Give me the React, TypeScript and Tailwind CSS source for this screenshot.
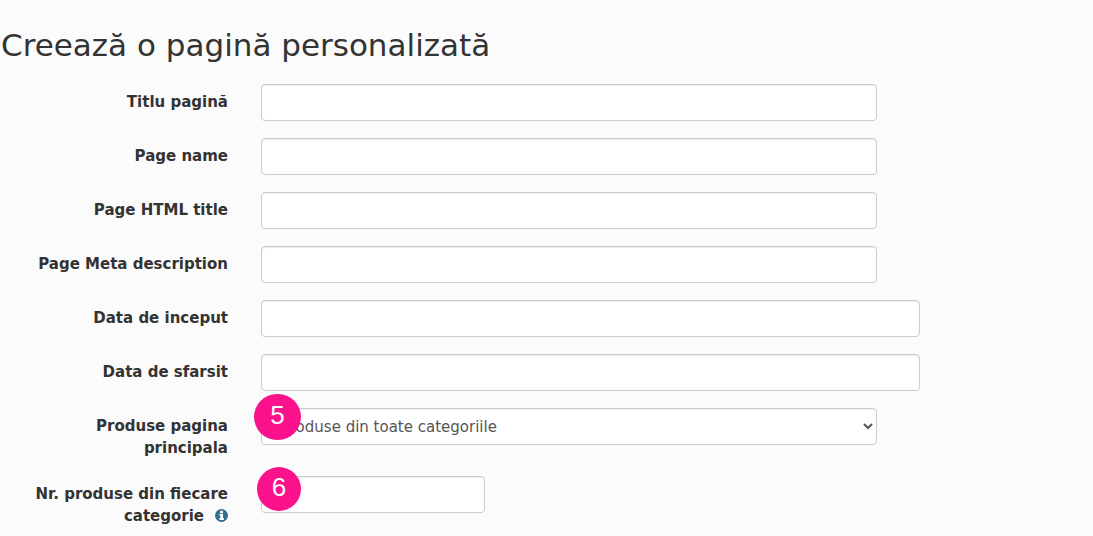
import React from "react";

const fields = [
  { id: "titlu", label: "Titlu pagină", width: "w-[616px]" },
  { id: "name", label: "Page name", width: "w-[616px]" },
  { id: "html-title", label: "Page HTML title", width: "w-[616px]" },
  { id: "meta", label: "Page Meta description", width: "w-[616px]" },
  { id: "start", label: "Data de inceput", width: "w-[659px]" },
  { id: "end", label: "Data de sfarsit", width: "w-[659px]" },
];

const control =
  "h-[37px] max-w-full rounded border border-[#cccccc] bg-white px-[15px] text-[15px] text-[#555555] shadow-[inset_0_1px_1px_rgba(0,0,0,0.075)]";
const labelStyle = "w-[228px] shrink-0 pl-4 pt-[7px] text-right font-bold leading-[22px]";

function Marker({ value, className }: { value: string; className: string }) {
  return (
    <span
      className={`absolute flex items-center justify-center rounded-full bg-[#fa128d] pb-1 font-['Liberation_Sans',sans-serif] text-[26px] leading-none text-white ${className}`}
    >
      {value}
    </span>
  );
}

export default function App() {
  return (
    <main className="min-h-screen bg-[#fbfbfb] pt-[29px] font-['DejaVu_Sans',sans-serif] text-[15px] text-[#333333]">
      <h1 className="pl-px text-[31px] leading-[33px]">Creează o pagină personalizată</h1>
      <form className="mt-[22px] flex flex-col gap-[17px]">
        {fields.map((f) => (
          <div key={f.id} className="flex items-start gap-[33px]">
            <label htmlFor={f.id} className={labelStyle}>
              {f.label}
            </label>
            <input id={f.id} type="text" className={`${control} ${f.width}`} />
          </div>
        ))}
        <div className="flex items-start gap-[33px]">
          <label htmlFor="products" className={labelStyle}>
            Produse pagina principala
          </label>
          <div className="relative">
            <select id="products" className={`${control} w-[616px]`}>
              <option>Produse din toate categoriile</option>
            </select>
            <Marker value="5" className="-left-[7px] -top-[14px] h-[46px] w-[47px]" />
          </div>
        </div>
        <div className="flex items-start gap-[33px]">
          <label htmlFor="count" className={labelStyle}>
            Nr. produse din fiecare categorie
            <svg viewBox="0 0 14 14" className="ml-[11px] inline size-[13px] align-[-1px]" aria-hidden="true">
              <circle cx="7" cy="7" r="7" fill="#31708f" />
              <path d="M5.6 2h3v2.200h-3zM4.800 5.100h3.800v4.700h1V11.800H4.800V9.800h1V7.100h-1z" fill="#fff" />
            </svg>
          </label>
          <div className="relative">
            <input id="count" type="text" className={`${control} w-[224px]`} />
            <Marker value="6" className="-left-1 -top-[9px] size-[44px]" />
          </div>
        </div>
      </form>
    </main>
  );
}
